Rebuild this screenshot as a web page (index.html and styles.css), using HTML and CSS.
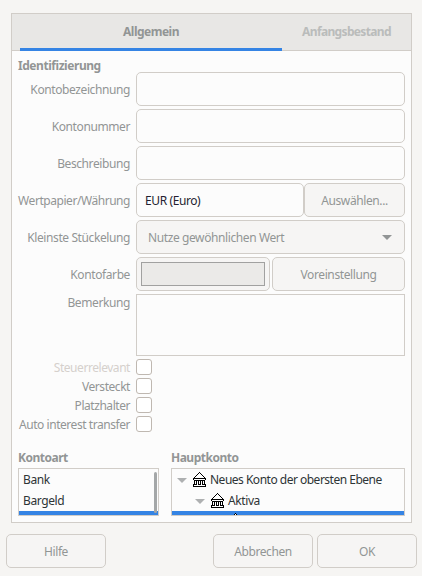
FILE: index.html
```html
<!DOCTYPE html>
<html lang="de">
<head>
<meta charset="utf-8">
<title>Neues Konto</title>
<link rel="stylesheet" href="styles.css">
</head>
<body>
<svg class="defs" aria-hidden="true">
  <symbol id="bank" viewBox="0 0 14 15" shape-rendering="crispEdges">
    <path fill="#fff" d="M6 1h1v1h1v1h1v1h1v1h1v1H2V5h1V4h1V3h1V2h1zM1 7h12v7H1z"/>
    <path fill="#000" d="M6 0h1v1H6zM5 1h1v1H5zM7 1h1v1H7zM4 2h1v1H4zM8 2h1v1H8zM3 3h1v1H3zM9 3h1v1H9zM2 4h1v1H2zM10 4h1v1h-1zM1 5h1v1H1zM11 5h1v1h-1zM0 6h13v1H0zM0 7h1v1H0zM12 7h1v1h-1zM1 8h11v1H1zM1 9h1v4H1zM3 9h1v4H3zM5 9h1v4H5zM7 9h1v4H7zM9 9h1v4H9zM11 9h1v4h-1zM2 12h1v1H2zM6 12h1v1H6zM10 12h1v1h-1zM0 12h1v3H0zM12 12h1v3h-1zM0 14h13v1H0z"/>
  </symbol>
  <symbol id="arrow" viewBox="0 0 10 5"><path d="M0 0h10L5 5z"/></symbol>
</svg>
<main class="panel">
  <nav class="tabs">
    <div class="tab active"><span>Allgemein</span></div>
    <div class="tab idle"><span>Anfangsbestand</span></div>
  </nav>
  <section class="content">
    <h2 class="identity">Identifizierung</h2>
    <div class="form">
      <label>Kontobezeichnung</label><div class="entry"></div>
      <label>Kontonummer</label><div class="entry"></div>
      <label>Beschreibung</label><div class="entry"></div>
      <label class="security">Wertpapier/Währung</label>
      <div class="row joined"><div class="entry currency">EUR (Euro)</div><button class="choose">Auswählen...</button></div>
      <label>Kleinste Stückelung</label>
      <button class="combo"><span>Nutze gewöhnlichen Wert</span><svg width="10" height="5"><use href="#arrow"/></svg></button>
      <label>Kontofarbe</label>
      <div class="row split"><button class="color"><span></span></button><button class="preset">Voreinstellung</button></div>
      <label class="top">Bemerkung</label><div class="textview"></div>
    </div>
    <div class="checks">
      <label class="faded">Steuerrelevant</label><i></i>
      <label>Versteckt</label><i></i>
      <label>Platzhalter</label><i></i>
      <label class="auto">Auto interest transfer</label><i></i>
    </div>
    <div class="lists">
      <div>
        <h2>Kontoart</h2>
        <div class="list types"><p>Bank</p><p>Bargeld</p><div class="selected"></div><b class="scroll"></b></div>
      </div>
      <div>
        <h2>Hauptkonto</h2>
        <div class="list tree">
          <p><svg class="arrow" width="10" height="5"><use href="#arrow"/></svg><svg class="bank" width="14" height="15"><use href="#bank"/></svg><span class="root">Neues Konto der obersten Ebene</span></p>
          <p class="child"><svg class="arrow" width="10" height="5"><use href="#arrow"/></svg><svg class="bank" width="14" height="15"><use href="#bank"/></svg><span>Aktiva</span></p>
          <div class="selected"><svg class="bank" width="14" height="15"><use href="#bank"/></svg></div>
        </div>
      </div>
    </div>
  </section>
</main>
<footer><button class="help">Hilfe</button><button>Abbrechen</button><button>OK</button></footer>
</body>
</html>
```
FILE: styles.css
```css
* { box-sizing: border-box; margin: 0; }
body { width: 422px; height: 576px; padding: 13px 5px 0 6px; background: #f6f5f3; color: #929595; font: 12px/16px "Noto Sans", sans-serif; letter-spacing: -.4px; overflow: hidden; }
.defs { position: absolute; width: 0; height: 0; }
button { font: inherit; letter-spacing: inherit; color: inherit; background: #f6f5f4; border: 1px solid #d1cdc8; border-radius: 5px; height: 34px; padding: 1px 0 0; }
h2 { font-size: 12px; line-height: 16px; font-weight: 700; letter-spacing: -.5px; }
.panel { width: 401px; height: 510px; margin-left: 5px; border: 1px solid #d1cdc8; background: #fcfcfc; }
.tabs { display: flex; height: 37px; padding: 0 8px; background: #e8e7e5; border-bottom: 1px solid #d1cdc8; }
.tab { height: 37px; text-align: center; font-weight: 700; padding-top: 10px; letter-spacing: -.5px; }
.active { width: 262px; border-bottom: 3px solid #3584e4; }
.idle { flex: 1; color: #babcbb; letter-spacing: -.65px; padding-left: 8px; }
.content { padding: 6px 6px 0; }
.identity { height: 16px; padding-top: 1px; letter-spacing: -.45px; }
.form { display: grid; grid-template-columns: 112px 269px; column-gap: 6px; row-gap: 3px; margin-top: -1px; }
label { text-align: right; align-self: center; white-space: nowrap; padding-top: 1px; }
.security { letter-spacing: -.45px; }
.top { align-self: start; }
.entry { height: 34px; border: 1px solid #d1cdc8; border-radius: 5px; background: #fcfcfc; padding: 9px 8px 7px; }
.row { display: flex; }
.currency { width: 168px; color: #241f31; }
.choose { width: 101px; }
.combo { display: flex; align-items: center; justify-content: space-between; padding: 1px 12px 0 11px; }
.combo svg { fill: #929595; }
.split { justify-content: space-between; }
.color { width: 134px; padding: 4px; }
.color span { display: block; height: 24px; border: 1px solid #a1a1a0; background: #ebeae8; }
.preset { width: 133px; }
.textview { height: 62px; border: 1px solid #d1cdc8; }
.checks { display: grid; grid-template-columns: 112px 16px; gap: 3px 6px; margin-top: 3px; }
.checks i { width: 16px; height: 16px; border: 1px solid #bfb8b1; border-radius: 3px; background: #fff; }
.checks label { height: 16px; letter-spacing: -.45px; }
.faded { color: #d5d0cc; }
.lists { display: grid; grid-template-columns: 141px 234px; column-gap: 12px; margin-top: 18px; }
.list { position: relative; height: 48px; margin-top: 2px; border: 1px solid #d1cdc8; overflow: hidden; color: #2e3436; }
.list p { height: 21px; padding: 3px 4px 0; white-space: nowrap; }
.selected { height: 25px; background: #3584e4; }
.scroll { position: absolute; right: 1px; top: 3px; width: 3px; height: 41px; border-radius: 3px; background: #a4a7a8; }
.tree p { display: flex; padding: 3px 0 0 5px; }
.tree .child { padding-left: 23px; }
.tree .arrow { fill: #aeb0b1; margin: 6px 6px 0 0; }
.tree .bank { margin-right: 3px; flex: none; }
.root { letter-spacing: -.5px; }
.tree .selected .bank { display: block; margin: 2px 0 0 57px; }
.tree .selected { display: flex; }
footer { display: flex; gap: 4px; margin-top: 11px; }
footer button { width: 100px; }
.help { margin-right: 103px; }
```
